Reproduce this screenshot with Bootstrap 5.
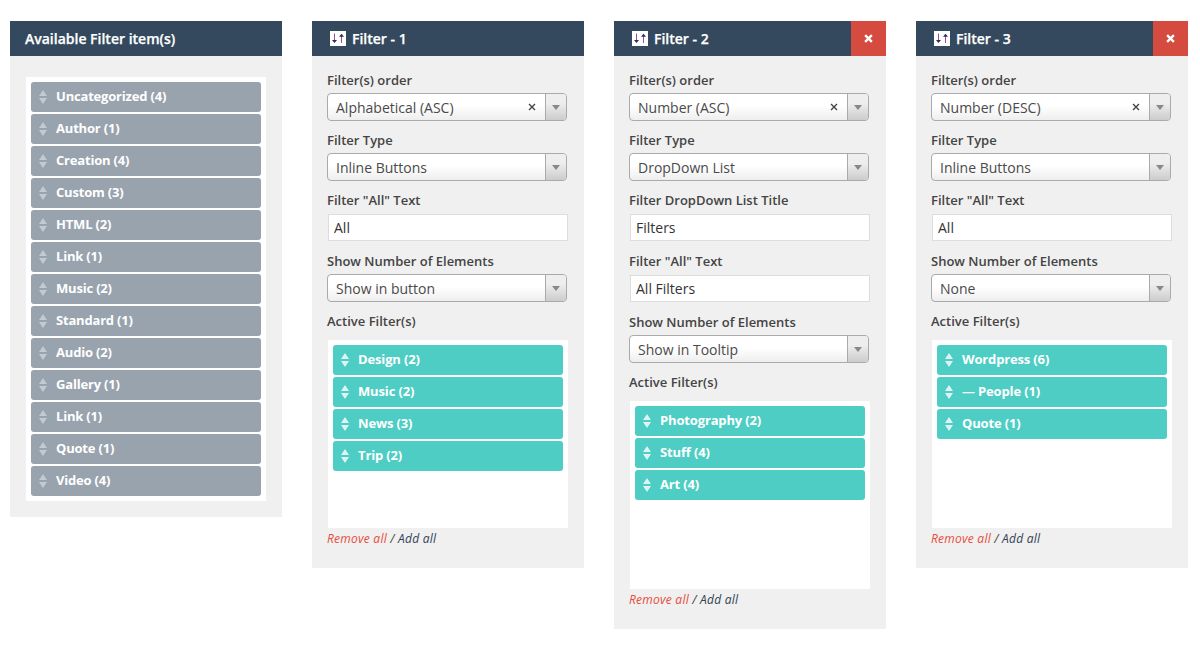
<!DOCTYPE html>
<html lang="en">
<head>
<meta charset="utf-8">
<meta name="viewport" content="width=device-width, initial-scale=1">
<title>Filters</title>
<link href="https://cdn.jsdelivr.net/npm/bootstrap@5.3.0/dist/css/bootstrap.min.css" rel="stylesheet">
<style>
body{font-family:"Open Sans","Liberation Sans",sans-serif;font-size:13px;line-height:20px;color:#444;background:#fff}
.board{padding:21px 0 0 10px;gap:30px}
.panel{width:272px;background:#f0f0f0}
.panel-head{height:35px;background:#34495e;color:#fff;font-weight:600;font-size:14px;padding-left:15px;-webkit-text-stroke:.25px #fff}
.panel-head .ttl-icon{width:16px;height:15px;margin:0 6px 1px 3px}
.close-box{width:35px;height:35px;background:#d64b3f;border:0;padding:0}
.panel-body{padding:14px 15px 20px}
.panel-body.plain{padding:21px 15px 16px}
.field-label{display:block;font-weight:600;height:20px;margin-bottom:3px;color:#444}
.picker{width:240px;height:28px;border:1px solid #aaa;border-radius:4px;background:linear-gradient(#fff 45%,#eee 100%);margin-bottom:9px;overflow:hidden;font-size:14px;line-height:28px;color:#4a4a4a;padding-left:8px;font-weight:400}
.picker .clear-mark{width:8px;height:8px;margin-right:9px;color:#444;stroke-width:1.4}
.picker .arrow-box{width:21px;border-left:1px solid #aaa;background:linear-gradient(#eee 35%,#ccc 100%)}
.entry{width:240px;height:27px;border:1px solid #ddd;background:#fff;margin:4px 0 10px 1px;padding:0 5px;font-size:14px;line-height:25px;color:#333;display:block;border-radius:0}
.sort-list{width:240px;background:#fff;margin:0 0 0 1px;padding:5px;gap:2px;list-style:none}
.sort-list.active-set{height:188px;margin-top:9px}
.sort-list li{height:30px;border-radius:3px;background:#99a3ae;color:#fff;font-weight:700;padding:0 0 2px 8px;line-height:28px;letter-spacing:-.19px}
.sort-list.active-set li{background:#4ecdc4;letter-spacing:-.15px}
.sort-list svg{width:8px;height:14px;margin:2px 9px 0 0;fill:#c3c9cf}
.sort-list.active-set svg{fill:#dcf5f3}
.foot{font-size:12px;font-style:italic;font-weight:500;letter-spacing:.24px;height:20px;color:#444;line-height:21px}
.foot a{text-decoration:none;color:#2f4255}
.foot a.del{color:#e74c3c}
</style>
</head>
<body>
<svg class="d-none" xmlns="http://www.w3.org/2000/svg">
<symbol id="grip" viewBox="0 0 8 14"><path d="M4 0 8 6H0zM0 8h8l-4 6z"/></symbol>
<symbol id="sliders" viewBox="0 0 16 15"><rect width="16" height="15" fill="#fff"/><path d="M4.5 2.5V11" stroke="#9650a0" fill="none"/><path d="M2 9h5L4.5 12z" fill="#2c2c54"/><path d="M11.5 12V4" stroke="#9650a0" fill="none"/><path d="M9 5.7h5L11.5 2.7z" fill="#2c2c54"/></symbol>
<symbol id="cross" viewBox="0 0 8 8"><path d="M1 1l6 6M7 1L1 7" stroke="currentColor" fill="none"/></symbol>
<symbol id="caret" viewBox="0 0 8 5"><path d="M0 0h8L4 5z" fill="#888"/></symbol>
</svg>
<main class="board d-flex align-items-start">

<section class="panel flex-shrink-0">
<div class="panel-head d-flex align-items-center">Available Filter item(s)</div>
<div class="panel-body plain">
<ul class="sort-list d-flex flex-column">
<li class="d-flex align-items-center"><svg><use href="#grip"/></svg>Uncategorized (4)</li>
<li class="d-flex align-items-center"><svg><use href="#grip"/></svg>Author (1)</li>
<li class="d-flex align-items-center"><svg><use href="#grip"/></svg>Creation (4)</li>
<li class="d-flex align-items-center"><svg><use href="#grip"/></svg>Custom (3)</li>
<li class="d-flex align-items-center"><svg><use href="#grip"/></svg>HTML (2)</li>
<li class="d-flex align-items-center"><svg><use href="#grip"/></svg>Link (1)</li>
<li class="d-flex align-items-center"><svg><use href="#grip"/></svg>Music (2)</li>
<li class="d-flex align-items-center"><svg><use href="#grip"/></svg>Standard (1)</li>
<li class="d-flex align-items-center"><svg><use href="#grip"/></svg>Audio (2)</li>
<li class="d-flex align-items-center"><svg><use href="#grip"/></svg>Gallery (1)</li>
<li class="d-flex align-items-center"><svg><use href="#grip"/></svg>Link (1)</li>
<li class="d-flex align-items-center"><svg><use href="#grip"/></svg>Quote (1)</li>
<li class="d-flex align-items-center"><svg><use href="#grip"/></svg>Video (4)</li>
</ul>
</div>
</section>

<section class="panel flex-shrink-0">
<div class="panel-head d-flex align-items-center"><svg class="ttl-icon"><use href="#sliders"/></svg>Filter - 1</div>
<div class="panel-body">
<span class="field-label">Filter(s) order</span>
<div class="picker d-flex"><span class="flex-grow-1">Alphabetical (ASC)</span><svg class="clear-mark align-self-center"><use href="#cross"/></svg><span class="arrow-box d-flex align-items-center justify-content-center"><svg width="8" height="5"><use href="#caret"/></svg></span></div>
<span class="field-label">Filter Type</span>
<div class="picker d-flex"><span class="flex-grow-1">Inline Buttons</span><span class="arrow-box d-flex align-items-center justify-content-center"><svg width="8" height="5"><use href="#caret"/></svg></span></div>
<span class="field-label">Filter "All" Text</span>
<input class="entry" type="text" value="All">
<span class="field-label">Show Number of Elements</span>
<div class="picker d-flex"><span class="flex-grow-1">Show in button</span><span class="arrow-box d-flex align-items-center justify-content-center"><svg width="8" height="5"><use href="#caret"/></svg></span></div>
<span class="field-label mb-0">Active Filter(s)</span>
<ul class="sort-list active-set d-flex flex-column">
<li class="d-flex align-items-center"><svg><use href="#grip"/></svg>Design (2)</li>
<li class="d-flex align-items-center"><svg><use href="#grip"/></svg>Music (2)</li>
<li class="d-flex align-items-center"><svg><use href="#grip"/></svg>News (3)</li>
<li class="d-flex align-items-center"><svg><use href="#grip"/></svg>Trip (2)</li>
</ul>
<div class="foot"><a class="del" href="#">Remove all</a> / <a href="#">Add all</a></div>
</div>
</section>

<section class="panel flex-shrink-0">
<div class="panel-head d-flex align-items-center"><svg class="ttl-icon"><use href="#sliders"/></svg>Filter - 2<button class="close-box ms-auto d-flex align-items-center justify-content-center text-white" type="button" aria-label="Close"><svg width="9" height="9" stroke-width="2.1"><use href="#cross"/></svg></button></div>
<div class="panel-body">
<span class="field-label">Filter(s) order</span>
<div class="picker d-flex"><span class="flex-grow-1">Number (ASC)</span><svg class="clear-mark align-self-center"><use href="#cross"/></svg><span class="arrow-box d-flex align-items-center justify-content-center"><svg width="8" height="5"><use href="#caret"/></svg></span></div>
<span class="field-label">Filter Type</span>
<div class="picker d-flex"><span class="flex-grow-1">DropDown List</span><span class="arrow-box d-flex align-items-center justify-content-center"><svg width="8" height="5"><use href="#caret"/></svg></span></div>
<span class="field-label">Filter DropDown List Title</span>
<input class="entry" type="text" value="Filters">
<span class="field-label">Filter "All" Text</span>
<input class="entry" type="text" value="All Filters">
<span class="field-label">Show Number of Elements</span>
<div class="picker d-flex"><span class="flex-grow-1">Show in Tooltip</span><span class="arrow-box d-flex align-items-center justify-content-center"><svg width="8" height="5"><use href="#caret"/></svg></span></div>
<span class="field-label mb-0">Active Filter(s)</span>
<ul class="sort-list active-set d-flex flex-column">
<li class="d-flex align-items-center"><svg><use href="#grip"/></svg>Photography (2)</li>
<li class="d-flex align-items-center"><svg><use href="#grip"/></svg>Stuff (4)</li>
<li class="d-flex align-items-center"><svg><use href="#grip"/></svg>Art (4)</li>
</ul>
<div class="foot"><a class="del" href="#">Remove all</a> / <a href="#">Add all</a></div>
</div>
</section>

<section class="panel flex-shrink-0">
<div class="panel-head d-flex align-items-center"><svg class="ttl-icon"><use href="#sliders"/></svg>Filter - 3<button class="close-box ms-auto d-flex align-items-center justify-content-center text-white" type="button" aria-label="Close"><svg width="9" height="9" stroke-width="2.1"><use href="#cross"/></svg></button></div>
<div class="panel-body">
<span class="field-label">Filter(s) order</span>
<div class="picker d-flex"><span class="flex-grow-1">Number (DESC)</span><svg class="clear-mark align-self-center"><use href="#cross"/></svg><span class="arrow-box d-flex align-items-center justify-content-center"><svg width="8" height="5"><use href="#caret"/></svg></span></div>
<span class="field-label">Filter Type</span>
<div class="picker d-flex"><span class="flex-grow-1">Inline Buttons</span><span class="arrow-box d-flex align-items-center justify-content-center"><svg width="8" height="5"><use href="#caret"/></svg></span></div>
<span class="field-label">Filter "All" Text</span>
<input class="entry" type="text" value="All">
<span class="field-label">Show Number of Elements</span>
<div class="picker d-flex"><span class="flex-grow-1">None</span><span class="arrow-box d-flex align-items-center justify-content-center"><svg width="8" height="5"><use href="#caret"/></svg></span></div>
<span class="field-label mb-0">Active Filter(s)</span>
<ul class="sort-list active-set d-flex flex-column">
<li class="d-flex align-items-center"><svg><use href="#grip"/></svg>Wordpress (6)</li>
<li class="d-flex align-items-center"><svg><use href="#grip"/></svg>— People (1)</li>
<li class="d-flex align-items-center"><svg><use href="#grip"/></svg>Quote (1)</li>
</ul>
<div class="foot"><a class="del" href="#">Remove all</a> / <a href="#">Add all</a></div>
</div>
</section>

</main>
<script src="https://cdn.jsdelivr.net/npm/bootstrap@5.3.0/dist/js/bootstrap.bundle.min.js"></script>
</body>
</html>
